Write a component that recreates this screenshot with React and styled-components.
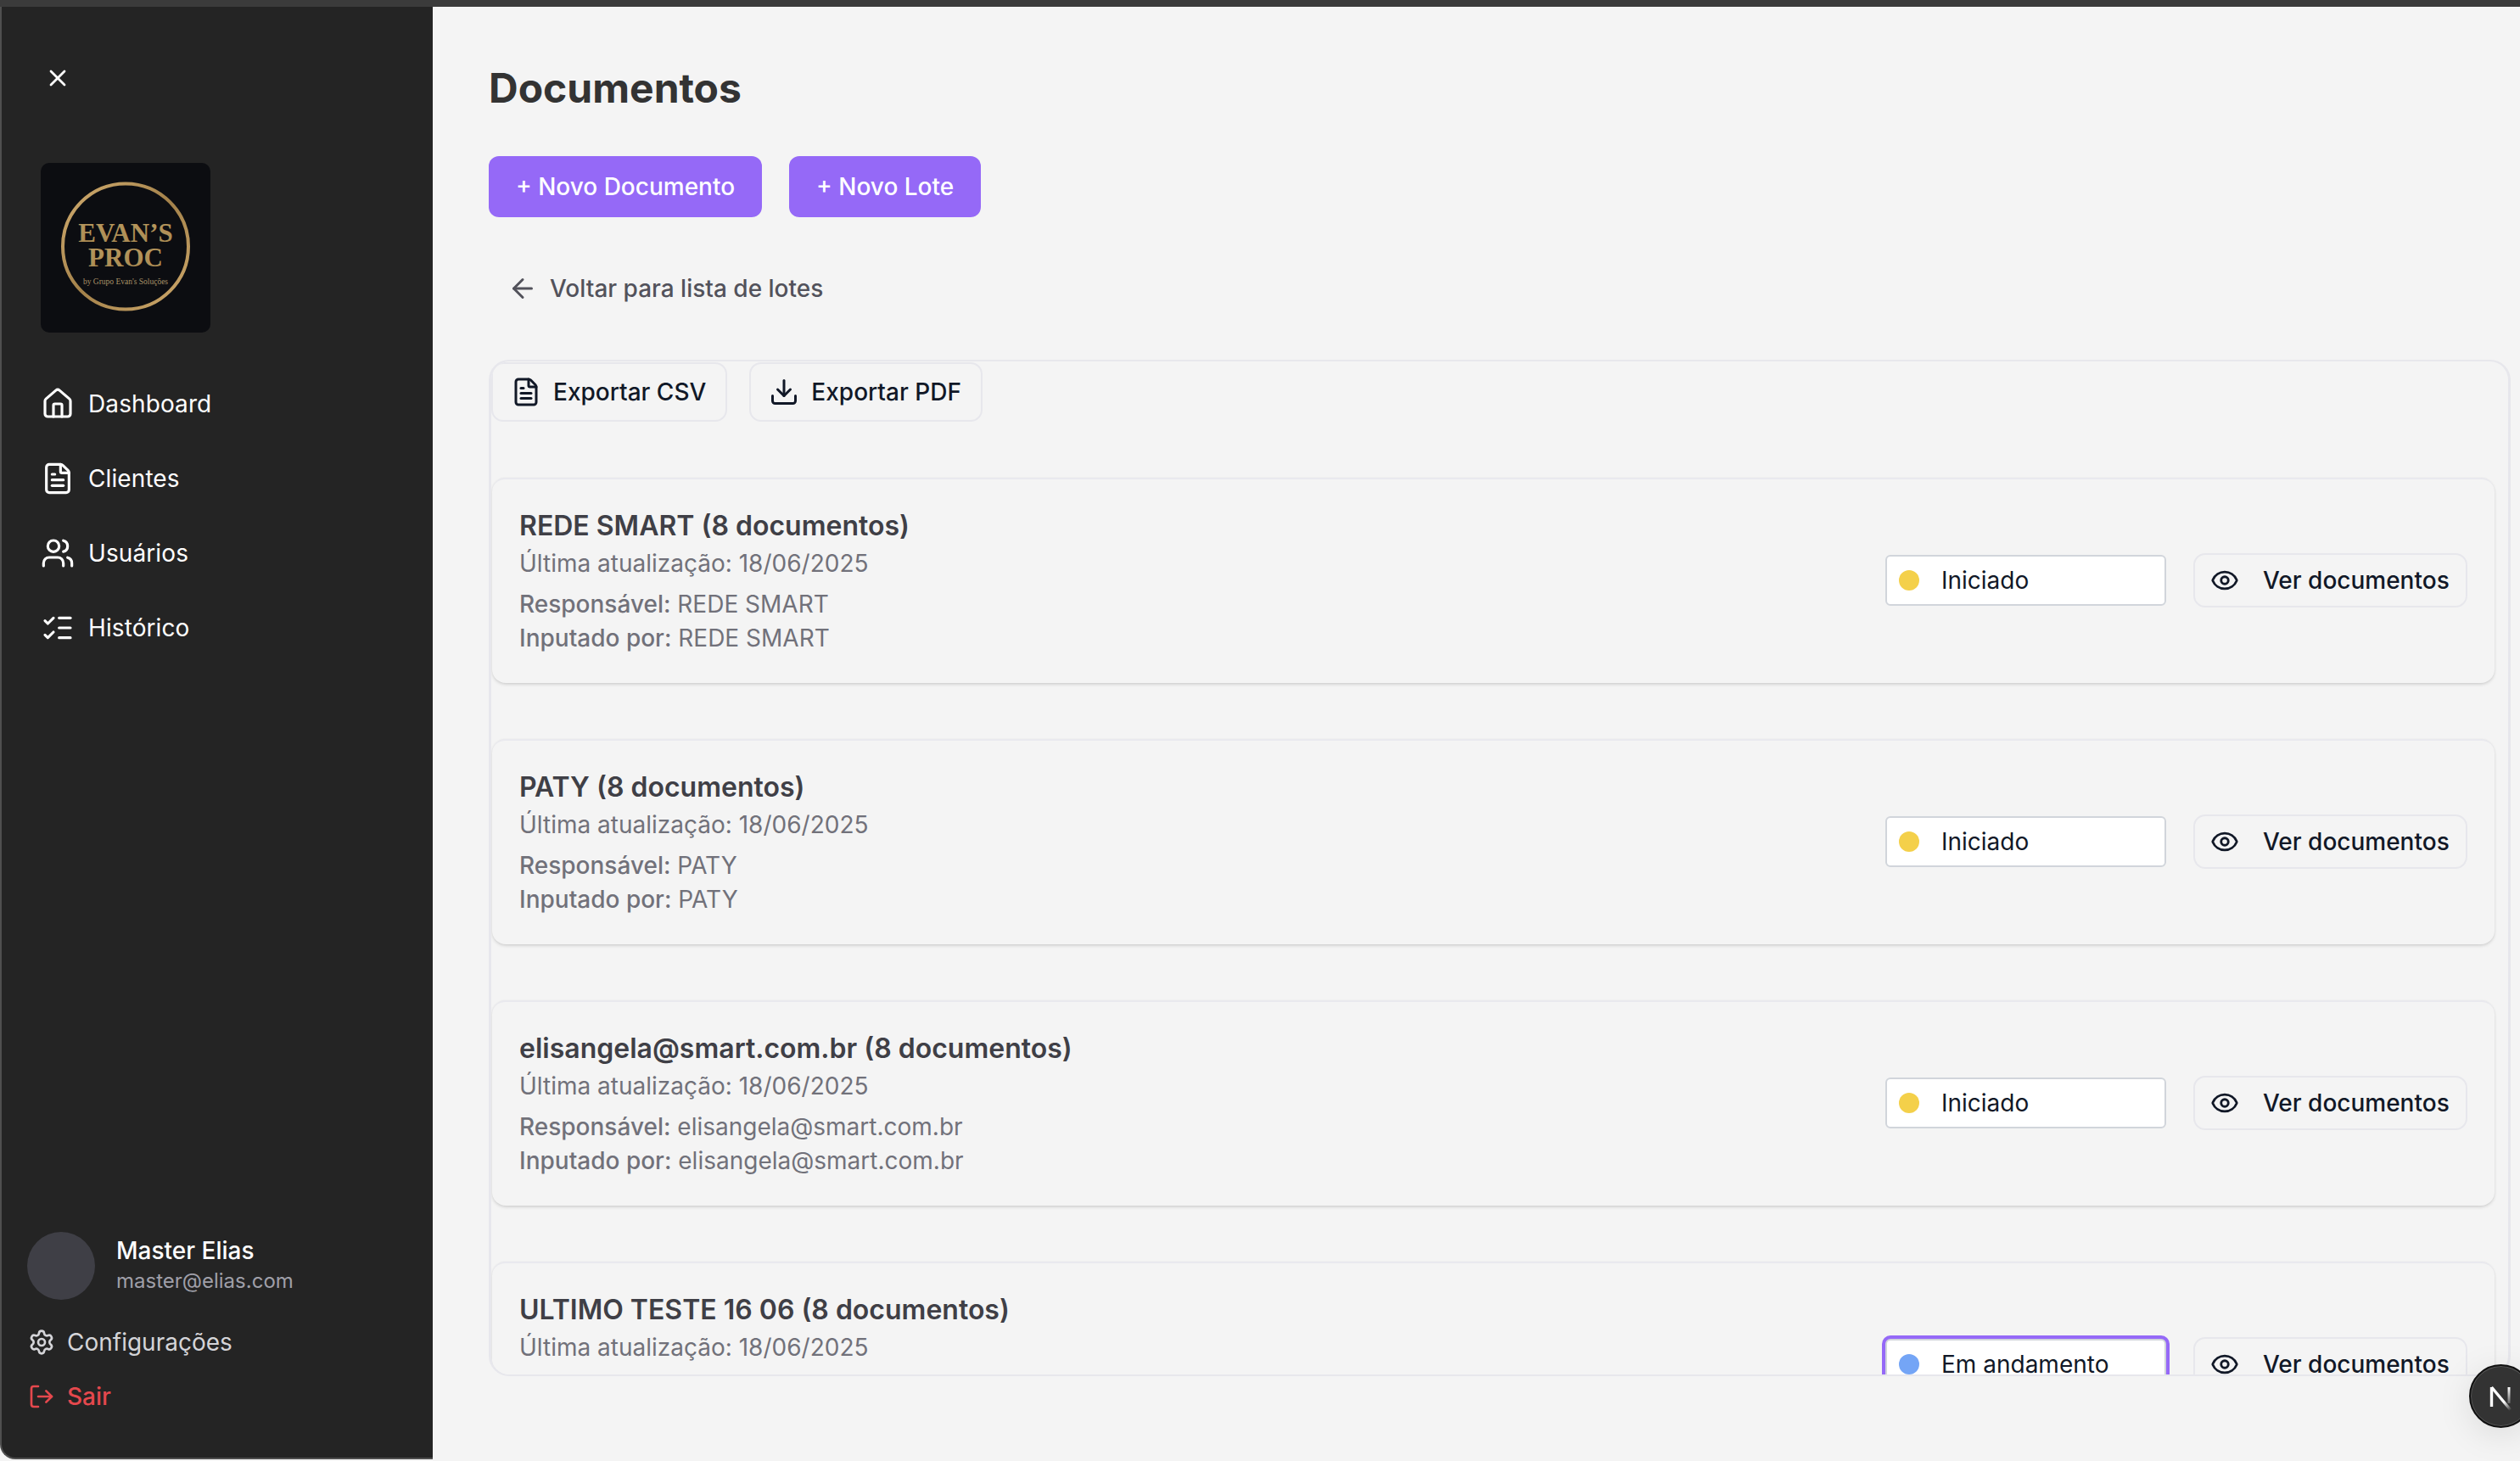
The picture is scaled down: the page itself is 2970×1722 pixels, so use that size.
import React from "react";
import styled, { createGlobalStyle } from "styled-components";
import {
  X,
  House,
  FileText,
  Users,
  ListChecks,
  Settings,
  LogOut,
  ArrowLeft,
  Download,
  Eye,
} from "lucide-react";

const lots = [
  { name: "REDE SMART", status: "Iniciado", color: "#f4d04a" },
  { name: "PATY", status: "Iniciado", color: "#f4d04a" },
  { name: "elisangela@smart.com.br", status: "Iniciado", color: "#f4d04a" },
  { name: "ULTIMO TESTE 16 06", status: "Em andamento", color: "#74a5f6", focused: true },
];

const navItems = [
  { label: "Dashboard", Icon: House },
  { label: "Clientes", Icon: FileText },
  { label: "Usuários", Icon: Users },
  { label: "Histórico", Icon: ListChecks },
];

const Logo = () => (
  <LogoBox>
    <svg width="200" height="200" viewBox="0 0 200 200">
      <defs>
        <linearGradient id="gold" x1="0" y1="0" x2="1" y2="1">
          <stop offset="0" stopColor="#d2ad70" />
          <stop offset="0.5" stopColor="#a3814a" />
          <stop offset="1" stopColor="#d0aa6c" />
        </linearGradient>
        <linearGradient id="goldText" x1="0" y1="0" x2="0" y2="1">
          <stop offset="0" stopColor="#b8985e" />
          <stop offset="1" stopColor="#a98a52" />
        </linearGradient>
      </defs>
      <circle cx="100" cy="98.5" r="74" fill="none" stroke="url(#gold)" strokeWidth="4" />
      <text x="100" y="93" textAnchor="middle" fontFamily="Liberation Serif, serif" fontSize="31" fontWeight="700" fill="url(#goldText)">
        EVAN’S
      </text>
      <text x="100" y="122" textAnchor="middle" fontFamily="Liberation Serif, serif" fontSize="31" fontWeight="700" fill="url(#goldText)">
        PROC
      </text>
      <text x="100" y="143" textAnchor="middle" fontFamily="Liberation Serif, serif" fontSize="9.5" fill="#a89268">
        by Grupo Evan's Soluções
      </text>
    </svg>
  </LogoBox>
);

const App = () => {
  return (
    <Page>
      <GlobalStyle />
      <TopBar />
      <Body>
        <Sidebar>
          <div>
            <CloseButton>
              <X size={32} strokeWidth={2.1} />
            </CloseButton>
            <Logo />
            <Nav>
              {navItems.map(({ label, Icon }) => (
                <NavItem key={label}>
                  <Icon size={40} strokeWidth={1.9} />
                  <span>{label}</span>
                </NavItem>
              ))}
            </Nav>
          </div>
          <SideFooter>
            <UserRow>
              <Avatar />
              <div>
                <UserName>Master Elias</UserName>
                <UserEmail>master@elias.com</UserEmail>
              </div>
            </UserRow>
            <FooterLink>
              <Settings size={32} strokeWidth={2} />
              <span>Configurações</span>
            </FooterLink>
            <FooterLink $danger>
              <LogOut size={32} strokeWidth={2} />
              <span>Sair</span>
            </FooterLink>
          </SideFooter>
        </Sidebar>

        <Main>
          <Title>Documentos</Title>
          <Actions>
            <PrimaryButton>+ Novo Documento</PrimaryButton>
            <PrimaryButton>+ Novo Lote</PrimaryButton>
          </Actions>
          <BackLink>
            <ArrowLeft size={36} strokeWidth={2} />
            <span>Voltar para lista de lotes</span>
          </BackLink>

          <Panel>
            <Toolbar>
              <OutlineButton>
                <FileText size={36} strokeWidth={2} />
                Exportar CSV
              </OutlineButton>
              <OutlineButton>
                <Download size={36} strokeWidth={2} />
                Exportar PDF
              </OutlineButton>
            </Toolbar>
            <List>
              {lots.map((lot) => (
                <Card key={lot.name}>
                  <div>
                    <CardTitle>{lot.name} (8 documentos)</CardTitle>
                    <CardDate>Última atualização: 18/06/2025</CardDate>
                    <CardMeta>
                      <strong>Responsável:</strong> {lot.name}
                    </CardMeta>
                    <CardMeta>
                      <strong>Inputado por:</strong> {lot.name}
                    </CardMeta>
                  </div>
                  <CardActions>
                    <StatusSelect $focused={lot.focused}>
                      <StatusDot $color={lot.color} />
                      {lot.status}
                    </StatusSelect>
                    <ViewButton>
                      <Eye size={34} strokeWidth={2} />
                      Ver documentos
                    </ViewButton>
                  </CardActions>
                </Card>
              ))}
            </List>
          </Panel>
        </Main>
      </Body>

      <DevBadge>
        <svg width="75" height="75" viewBox="0 0 75 75">
          <defs>
            <linearGradient id="stemFade" gradientUnits="userSpaceOnUse" x1="47" y1="27" x2="47" y2="46">
              <stop offset="0" stopColor="#fff" />
              <stop offset="1" stopColor="#fff" stopOpacity="0.25" />
            </linearGradient>
            <linearGradient id="diagFade" gradientUnits="userSpaceOnUse" x1="26" y1="27" x2="49" y2="54">
              <stop offset="0.65" stopColor="#fff" />
              <stop offset="1" stopColor="#fff" stopOpacity="0" />
            </linearGradient>
          </defs>
          <path d="M26.5 27 V50" stroke="#fff" strokeWidth="3.4" fill="none" />
          <path d="M26.5 27 L49 54" stroke="url(#diagFade)" strokeWidth="3.4" fill="none" />
          <path d="M47 27 V46" stroke="url(#stemFade)" strokeWidth="3" fill="none" />
        </svg>
      </DevBadge>
    </Page>
  );
};

const GlobalStyle = createGlobalStyle`
  html, body {
    margin: 0;
    padding: 0;
    overflow: hidden;
    background: #f4f4f4;
  }
  * {
    box-sizing: border-box;
  }
  body {
    font-family: Inter, "Liberation Sans", sans-serif;
  }
`;

const Page = styled.div`
  width: 2970px;
  height: 1722px;
  display: flex;
  flex-direction: column;
  background: #f4f4f4;
  overflow: hidden;
`;
const TopBar = styled.div`
  height: 8px;
  flex: none;
  background: #3b3b3b;
`;
const Body = styled.div`
  flex: 1;
  display: flex;
  min-height: 0;
`;
const Sidebar = styled.aside`
  width: 510px;
  height: 1712px;
  flex: none;
  display: flex;
  flex-direction: column;
  justify-content: space-between;
  background: #242424;
  border-left: 2px solid #4f4f4f;
  border-bottom: 2px solid #4f4f4f;
  border-bottom-left-radius: 18px;
  color: #fff;
`;
const CloseButton = styled.div`
  height: 32px;
  margin: 68px 0 0 50px;
  color: #fff;
  display: flex;
`;
const LogoBox = styled.div`
  width: 200px;
  height: 200px;
  margin: 84px 0 0 46px;
  background: #0c0d11;
  border-radius: 10px;
  overflow: hidden;
  svg {
    display: block;
  }
`;
const Nav = styled.nav`
  display: flex;
  flex-direction: column;
  gap: 40px;
  margin: 60px 0 0 46px;
`;
const NavItem = styled.div`
  display: flex;
  align-items: center;
  gap: 17px;
  height: 48px;
  font-size: 28px;
  font-weight: 400;
  letter-spacing: 0.1px;
  color: #fff;
  span {
    margin-left: -1px;
  }
`;
const SideFooter = styled.div`
  padding: 0 0 48px 30px;
`;
const UserRow = styled.div`
  display: flex;
  align-items: center;
  gap: 25px;
  margin-bottom: 26px;
`;
const Avatar = styled.div`
  width: 80px;
  height: 80px;
  border-radius: 50%;
  background: #3f3f46;
`;
const UserName = styled.div`
  font-size: 28px;
  font-weight: 500;
  line-height: 36px;
  color: #fff;
`;
const UserEmail = styled.div`
  font-size: 24px;
  line-height: 36px;
  color: #9f9fa8;
`;
const FooterLink = styled.div`
  display: flex;
  align-items: center;
  gap: 14px;
  height: 48px;
  margin-top: 16px;
  font-size: 28px;
  font-weight: ${(p) => (p.$danger ? 500 : 400)};
  color: ${(p) => (p.$danger ? "#e5484d" : "#d4d4d8")};
  svg {
    margin-left: 1px;
  }
`;
const Main = styled.main`
  flex: 1;
  min-width: 0;
  padding: 66px 11px 0 66px;
`;
const Title = styled.h1`
  margin: 0 0 50px;
  font-size: 48px;
  line-height: 60px;
  font-weight: 700;
  color: #333;
`;
const Actions = styled.div`
  display: flex;
  gap: 32px;
`;
const PrimaryButton = styled.button`
  height: 72px;
  padding: 0 32px;
  border: none;
  border-radius: 12px;
  background: #9569f7;
  color: #fff;
  font-family: inherit;
  font-size: 28px;
  font-weight: 500;
`;
const BackLink = styled.div`
  display: flex;
  align-items: center;
  gap: 14px;
  height: 56px;
  margin: 56px 0;
  padding-left: 22px;
  color: #52525b;
  font-size: 28px;
  font-weight: 500;
`;
const Panel = styled.section`
  height: 1198px;
  border: solid #e7e7ec;
  border-width: 2px 3px;
  border-radius: 24px;
  overflow: hidden;
`;
const Toolbar = styled.div`
  display: flex;
  gap: 26px;
  margin: 1px 0 66px 0;
`;
const OutlineButton = styled.button`
  display: flex;
  align-items: center;
  gap: 14px;
  height: 70px;
  padding: 0 23px 0 21px;
  border: 2px solid #e7e7ec;
  border-radius: 14px;
  background: transparent;
  color: #111827;
  font-family: inherit;
  font-size: 28px;
  font-weight: 500;
`;
const List = styled.div`
  display: flex;
  flex-direction: column;
  gap: 66px;
  padding: 0 16px 0 1px;
`;
const Card = styled.article`
  flex: none;
  height: 242px;
  display: flex;
  align-items: center;
  justify-content: space-between;
  padding: 0 32px 2px 32px;
  border-top: 2px solid #e9e9ee;
  border-radius: 16px;
  background: #f4f4f4;
  box-shadow: 0 2px 4px -1px rgba(0, 0, 0, 0.2), 0 0 3px -1px rgba(0, 0, 0, 0.08);
`;
const CardTitle = styled.div`
  font-size: 32px;
  line-height: 46px;
  font-weight: 600;
  color: #3f3f46;
`;
const CardDate = styled.div`
  font-size: 28px;
  line-height: 42px;
  margin-bottom: 7px;
  color: #71717a;
`;
const CardMeta = styled.div`
  font-size: 28px;
  line-height: 40px;
  color: #71717a;
  strong {
    font-weight: 500;
  }
`;
const CardActions = styled.div`
  display: flex;
  align-items: center;
  gap: 32px;
`;
const StatusSelect = styled.div`
  width: 331px;
  height: 60px;
  display: flex;
  align-items: center;
  gap: 26px;
  padding-left: 14px;
  border: 2px solid #d1d5db;
  border-radius: 6px;
  background: #fff;
  color: #111827;
  font-size: 28px;
  box-shadow: ${(p) => (p.$focused ? "0 0 0 4px #9569f7" : "none")};
`;
const StatusDot = styled.span`
  width: 24px;
  height: 24px;
  border-radius: 50%;
  background: ${(p) => p.$color};
`;
const ViewButton = styled.button`
  width: 323px;
  height: 64px;
  display: flex;
  align-items: center;
  gap: 28px;
  padding: 0 0 0 18px;
  border: 2px solid #e7e7ec;
  border-radius: 14px;
  background: transparent;
  color: #111827;
  font-family: inherit;
  font-size: 28px;
  font-weight: 500;
  white-space: nowrap;
`;
const DevBadge = styled.div`
  position: fixed;
  left: 2910px;
  top: 1608px;
  width: 75px;
  height: 75px;
  border-radius: 50%;
  background: #333;
  border: 2px solid #111;
  box-shadow: 0 0 0 1px #555 inset, 0 8px 40px rgba(0, 0, 0, 0.1);
  svg {
    display: block;
    margin: -2px;
  }
`;

export default App;
